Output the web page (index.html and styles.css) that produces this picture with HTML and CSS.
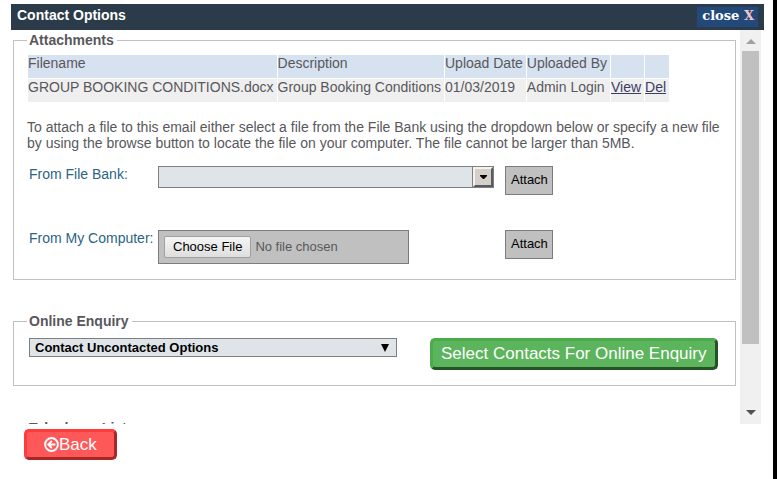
FILE: index.html
```
<!DOCTYPE html>
<html lang="en">
<head>
  <meta charset="UTF-8" />
  <meta name="viewport" content="width=device-width, initial-scale=1.0"/>
  <title>Contact Options</title>
  <link rel="stylesheet" href="styles.css">
</head>
<body>
  <div class="dialog">
    <header class="titlebar">
      <h1>Contact Options</h1>
      <button type="button" class="close">close <span class="close-x">X</span></button>
    </header>

    <div class="panel">
      <div class="content">
        <fieldset class="attachments">
          <legend>Attachments</legend>
          <table class="files">
            <thead>
              <tr><th>Filename</th><th>Description</th><th>Upload Date</th><th>Uploaded By</th><th></th><th></th></tr>
            </thead>
            <tbody>
              <tr>
                <td>GROUP BOOKING CONDITIONS.docx</td>
                <td>Group Booking Conditions</td>
                <td>01/03/2019</td>
                <td>Admin Login</td>
                <td><a href="#">View</a></td>
                <td><a href="#">Del</a></td>
              </tr>
            </tbody>
          </table>
          <p class="help">To attach a file to this email either select a file from the File Bank using the dropdown below or specify a new file by using the browse button to locate the file on your computer. The file cannot be larger than 5MB.</p>
          <div class="form-row">
            <label for="bank">From File Bank:</label>
            <div class="field">
              <div class="combo">
                <select id="bank"><option></option></select>
                <span class="combo-arrow">
                  <svg width="7" height="4" viewBox="0 0 7 4"><path d="M0 0h7v1L4 4H3L0 1z"/></svg>
                </span>
              </div>
            </div>
            <button type="button" class="attach">Attach</button>
          </div>
          <div class="form-row">
            <label for="computer">From My Computer:</label>
            <div class="field">
              <input type="file" id="computer" class="file">
            </div>
            <button type="button" class="attach">Attach</button>
          </div>
        </fieldset>

        <fieldset class="enquiry">
          <legend>Online Enquiry</legend>
          <div class="enquiry-row">
            <div class="options">
              <select aria-label="Online enquiry contacts"><option>Contact Uncontacted Options</option></select>
              <svg class="options-arrow" width="8" height="8" viewBox="0 0 8 8"><path d="M0 0h8L4 8z"/></svg>
            </div>
            <button type="button" class="btn btn-green">Select Contacts For Online Enquiry</button>
          </div>
        </fieldset>

        <fieldset class="telephone">
          <legend>Telephone List</legend>
        </fieldset>
      </div>

      <div class="scrollbar">
        <svg class="arrow-up" width="10" height="5" viewBox="0 0 10 5"><path d="M5 0l5 5H0z"/></svg>
        <div class="thumb"></div>
        <svg class="arrow-down" width="10" height="5" viewBox="0 0 10 5"><path d="M0 0h10L5 5z"/></svg>
      </div>
    </div>

    <footer>
      <button type="button" class="btn btn-red">
        <svg width="15" height="15" viewBox="0 0 15 15" fill="none" stroke="#fff">
          <circle cx="7.5" cy="7.5" r="6.4" stroke-width="2"/>
          <path d="M7.8 4L4.3 7.5l3.5 3.5M4.4 7.5h7" stroke-width="1.9"/>
        </svg>Back
      </button>
    </footer>
  </div>
</body>
</html>
```

FILE: styles.css
```
:root {
  --navy: #2c3b4a;
  --line: #c0c0c0;
  --text: #58585c;
  --field: #dfe4e8;
}

* {
  box-sizing: border-box;
}

body {
  margin: 0;
  font-family: "Liberation Sans", Arial, sans-serif;
  font-size: 14px;
  line-height: 16px;
  color: var(--text);
  background: #fff;
  border-right: 4px solid #000;
}

.dialog {
  display: flex;
  flex-direction: column;
  height: 100vh;
  padding: 4px 9px 0 11px;
}

.titlebar {
  display: flex;
  justify-content: space-between;
  align-items: center;
  flex: none;
  height: 26px;
  padding: 0 6px;
  background: var(--navy);
}
.titlebar h1 {
  margin: 0 0 4px;
  font-size: 14px;
  color: #fff;
}
.close {
  height: 20px;
  padding: 0 4px 2px 5px;
  border: 0;
  background: #23497a;
  color: #fff;
  font: bold 13px/18px "DejaVu Serif", serif;
}
.close-x {
  color: #f4c4c8;
}

.panel {
  display: flex;
  flex: 1;
  min-height: 0;
  padding-right: 3px;
}
.content {
  flex: 1;
  overflow: hidden;
  padding: 2px 4px 0 2px;
}

fieldset {
  min-width: 0;
  margin: 0;
  border: 1px solid var(--line);
}
legend {
  padding: 0 3px 0 2px;
  font-weight: bold;
}
.attachments {
  padding: 6px 13px 15px;
}
.enquiry {
  margin-top: 33px;
  padding: 9px 13px 15px;
}
.telephone {
  margin-top: 34px;
  padding: 0 13px 40px;
}

.files {
  border-spacing: 1px;
  white-space: nowrap;
}
.files th,
.files td {
  height: 23px;
  padding: 0 3px 0 0;
  text-align: left;
  vertical-align: top;
  font-weight: normal;
}
.files th {
  background: #d6e2f0;
}
.files td {
  background: #efefef;
}
.files a {
  color: #3c3c64;
}

.help {
  margin: 16px 0 15px;
}

.form-row {
  display: flex;
  align-items: flex-start;
  padding-left: 2px;
}
.form-row + .form-row {
  margin-top: 35px;
}
.form-row label {
  flex: none;
  width: 129px;
  color: #2c6484;
}
.field {
  flex: none;
  width: 347px;
}

select {
  width: 100%;
  border: 1px solid #7c8084;
  border-radius: 0;
  background: var(--field);
  appearance: none;
  color: #000;
}
.combo {
  position: relative;
  width: 336px;
}
.combo select {
  display: block;
  height: 22px;
}
.combo-arrow {
  position: absolute;
  top: 1px;
  right: 1px;
  display: flex;
  align-items: center;
  justify-content: center;
  width: 20px;
  height: 20px;
  border: 2px solid;
  border-color: #f4f2ee #585c60 #585c60 #f4f2ee;
  outline: 1px solid #7c8084;
  background: #d4d0c8;
  pointer-events: none;
}

.attach {
  height: 29px;
  padding: 0 4px 2px 5px;
  border: 1px solid #7c7c80;
  background: #c0c0c0;
  font: 13px "Liberation Sans", Arial, sans-serif;
  color: #000;
}
.file {
  display: block;
  width: 251px;
  height: 34px;
  padding: 5px;
  border: 1px solid #7c7c80;
  background: #c0c0c0;
  font: 13px "Liberation Sans", Arial, sans-serif;
  color: #58585c;
}
.file::file-selector-button {
  height: 22px;
  margin: 0 4px 0 0;
  padding: 0 8px 2px;
  border: 1px solid #a0a0a0;
  border-radius: 2px;
  background: linear-gradient(#f6f6f6, #dedede);
  font: 13px "Liberation Sans", Arial, sans-serif;
  color: #000;
}

.enquiry-row {
  display: flex;
  align-items: flex-start;
  gap: 33px;
  padding-left: 2px;
}
.options {
  position: relative;
  flex: 0 1 368px;
}
.options select {
  display: block;
  height: 19px;
  padding: 0 5px;
  font: bold 13px "Liberation Sans", Arial, sans-serif;
}
.options-arrow {
  position: absolute;
  top: 6px;
  right: 8px;
  pointer-events: none;
}

.btn {
  height: 32px;
  border: 3px solid;
  border-radius: 5px;
  font: 17px "Liberation Sans", Arial, sans-serif;
  color: #fff;
  white-space: nowrap;
}
.btn-green {
  padding: 0 8px;
  background: #5cb45c;
  border-color: #4cac4c #245424 #245424 #4cac4c;
}
.btn-red {
  display: flex;
  align-items: center;
  padding: 0 17px;
  height: 31px;
  background: #ff5858;
  border-color: #ff3c3c #a82828 #a82828 #ff3c3c;
}

.scrollbar {
  display: flex;
  flex-direction: column;
  align-items: center;
  flex: none;
  width: 21px;
  padding: 9px 2px;
  background: #f0f0f0;
}
.arrow-up {
  fill: #a0a0a0;
}
.arrow-down {
  margin-top: auto;
  fill: #505050;
}
.thumb {
  width: 100%;
  height: 78%;
  margin-top: 7px;
  background: #c0c0c0;
}

footer {
  flex: none;
  padding: 5px 13px 19px;
}
```
